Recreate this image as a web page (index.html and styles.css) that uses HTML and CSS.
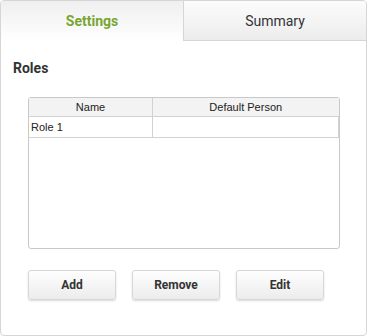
FILE: index.html
```html
<!DOCTYPE html>
<html lang="en">
<head>
    <meta charset="UTF-8">
    <title>Roles</title>
    <link rel="stylesheet" href="styles.css">
</head>
<body>
    <div class="panel">
        <div class="tabs">
            <div class="tab active">Settings</div>
            <div class="tab">Summary</div>
        </div>

        <div class="content">
            <h3>Roles</h3>

            <div class="grid">
                <table>
                    <thead>
                        <tr>
                            <th class="col-name">Name</th>
                            <th>Default Person</th>
                        </tr>
                    </thead>
                    <tbody>
                        <tr>
                            <td>Role 1</td>
                            <td></td>
                        </tr>
                    </tbody>
                </table>
            </div>

            <div class="buttons">
                <button>Add</button>
                <button>Remove</button>
                <button>Edit</button>
            </div>
        </div>
    </div>
</body>
</html>
```

FILE: styles.css
```css
body {
    margin: 0;
    font-family: Roboto, "Liberation Sans", Arial, sans-serif;
    background-color: #fff;
}
.panel {
    box-sizing: border-box;
    width: 367px;
    height: 336px;
    border: 1px solid #d6d6d6;
    border-radius: 4px;
    overflow: hidden;
}
.tabs {
    display: flex;
    height: 40px;
}
.tab {
    flex: 1;
    display: flex;
    align-items: center;
    justify-content: center;
    font-size: 14px;
    color: #333;
    background: linear-gradient(#fcfcfc, #ececec);
    border-left: 1px solid #d6d6d6;
    border-bottom: 1px solid #d6d6d6;
}
.tab.active {
    flex: 0 0 182px;
    color: #78a632;
    font-weight: bold;
    border: none;
    background: linear-gradient(#efefef, #fff);
}
.content {
    padding: 0 0 0 12px;
}
.content h3 {
    margin: 0;
    padding-top: 19px;
    height: 17px;
    font-size: 14px;
    line-height: 17px;
    color: #333;
}
.grid {
    box-sizing: border-box;
    margin: 20px 0 0 15px;
    width: 312px;
    height: 152px;
    border: 1px solid #c9c9c9;
    border-radius: 3px;
    overflow: hidden;
}
.grid table {
    width: 310px;
    table-layout: fixed;
    border-collapse: collapse;
    font-family: "Liberation Sans", Arial, sans-serif;
    font-size: 11px;
    color: #222;
}
.grid th {
    height: 18px;
    padding: 0;
    font-weight: normal;
    background-color: #f3f3f3;
    border-bottom: 1px solid #d2d2d2;
}
.grid th.col-name {
    width: 123px;
}
.grid th.col-name,
.grid td:first-child {
    border-right: 1px solid #d2d2d2;
}
.grid td {
    height: 20px;
    padding: 0 0 0 2px;
    border-bottom: 1px solid #d2d2d2;
}
.grid td:last-child {
    border-right: 1px solid #d2d2d2;
}
.buttons {
    display: flex;
    gap: 16px;
    margin: 21px 0 0 15px;
}
.buttons button {
    width: 88px;
    height: 30px;
    padding: 0;
    font-family: Roboto, "Liberation Sans", Arial, sans-serif;
    font-size: 12px;
    font-weight: bold;
    color: #333;
    background: linear-gradient(#fefefe, #ececec);
    border: 1px solid #d8d8d8;
    border-radius: 3px;
    box-shadow: 0 1px 2px rgba(0, 0, 0, 0.15);
    cursor: pointer;
}
```
